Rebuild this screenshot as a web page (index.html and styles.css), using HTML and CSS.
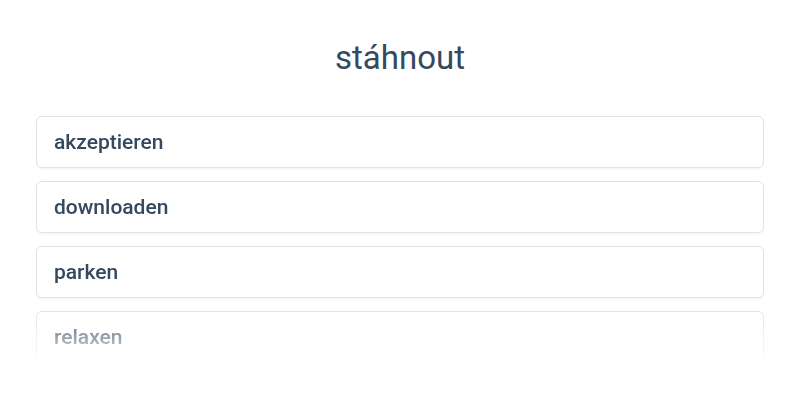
FILE: index.html
```html
<!DOCTYPE html>
<html lang="cs">
  <head>
    <meta charset="utf-8" />
    <meta name="viewport" content="width=device-width, initial-scale=1.0" />
    <title>stáhnout</title>
    <link rel="stylesheet" href="styles.css">
  </head>
  <body>
    <div class="container">
      <h1 class="title">stáhnout</h1>
      <div class="word-list">
        <div class="word-card">akzeptieren</div>
        <div class="word-card">downloaden</div>
        <div class="word-card">parken</div>
        <div class="word-card">relaxen</div>
      </div>
    </div>
  </body>
</html>
```

FILE: styles.css
```css
body,
html {
  margin: 0;
  padding: 0;
  height: 100%;
  background: #ffffff;
  font-family: Roboto, "Noto Sans", sans-serif;
  color: #34495e;
  -webkit-font-smoothing: antialiased;
  box-sizing: border-box;
}

.container {
  padding: 0 36px;
}

.title {
  margin: 0 0 38px;
  padding-top: 38px;
  text-align: center;
  font-weight: 400;
  font-size: 33px;
  line-height: 40px;
  color: #34495e;
}

.word-list {
  display: flex;
  flex-direction: column;
  gap: 13px;
  height: 252px;
  overflow: hidden;
  -webkit-mask-image: linear-gradient(to bottom, #000 0, #000 192px, rgba(0, 0, 0, 0.5) 222px, transparent 252px);
  mask-image: linear-gradient(to bottom, #000 0, #000 192px, rgba(0, 0, 0, 0.5) 222px, transparent 252px);
}

.word-card {
  flex: none;
  height: 50px;
  padding: 0 17px;
  display: flex;
  align-items: center;
  background: #ffffff;
  border: 1px solid #e2e2e2;
  border-radius: 6px;
  box-shadow: 0 1px 3px rgba(0, 0, 0, 0.06);
  font-size: 21px;
  font-weight: 500;
  color: #34495e;
}
```
